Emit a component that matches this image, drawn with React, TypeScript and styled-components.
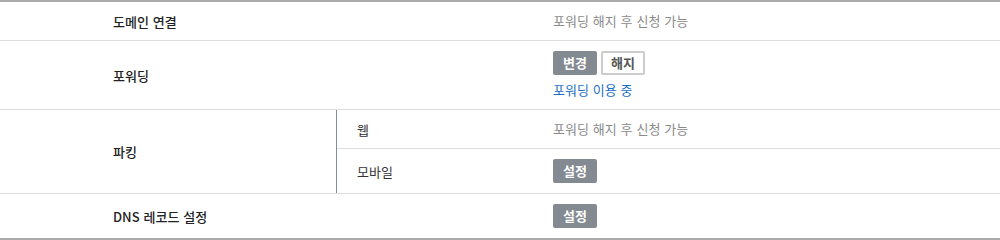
import * as React from 'react';
import styled, { createGlobalStyle } from 'styled-components';

const GlobalStyle = createGlobalStyle`
  html, body {
    margin: 0;
    padding: 0;
    background: #fff;
  }
  body {
    font-family: 'Noto Sans CJK KR', 'Noto Sans', sans-serif;
    font-size: 13px;
    word-spacing: 1px;
    color: #333;
  }
`;

export default function App() {
  return (
    <>
      <GlobalStyle />
      <Table>
        <Row>
          <Label>도메인 연결</Label>
          <Value>
            <Muted>포워딩 해지 후 신청 가능</Muted>
          </Value>
        </Row>
        <Row>
          <Label>포워딩</Label>
          <Value>
            <ButtonGroup>
              <Button>변경</Button>
              <Button variant="outline">해지</Button>
            </ButtonGroup>
            <Status>포워딩 이용 중</Status>
          </Value>
        </Row>
        <SplitRow>
          <GroupLabel>파킹</GroupLabel>
          <SubList>
            <SubRow>
              <SubLabel>웹</SubLabel>
              <Value>
                <Muted>포워딩 해지 후 신청 가능</Muted>
              </Value>
            </SubRow>
            <SubRow>
              <SubLabel>모바일</SubLabel>
              <Value>
                <Button>설정</Button>
              </Value>
            </SubRow>
          </SubList>
        </SplitRow>
        <Row>
          <Label>DNS 레코드 설정</Label>
          <Value>
            <Button>설정</Button>
          </Value>
        </Row>
      </Table>
    </>
  );
}

const Table = styled.div`
  border-top: 2px solid #aaa;
  border-bottom: 2px solid #aaa;
`;

const Row = styled.div`
  display: grid;
  grid-template-columns: 553px 1fr;
  border-bottom: 1px solid #ddd;
  &:last-child {
    border-bottom: none;
  }
`;

const SplitRow = styled.div`
  display: grid;
  grid-template-columns: 337px 1fr;
  border-bottom: 1px solid #ddd;
`;

const Label = styled.div`
  display: flex;
  align-items: center;
  padding-left: 113px;
  font-weight: 500;
  color: #222;
`;

const GroupLabel = styled(Label)`
  border-right: 1px solid #7f8e9e;
`;

const SubList = styled.div`
  display: flex;
  flex-direction: column;
`;

const SubRow = styled.div`
  display: grid;
  grid-template-columns: 216px 1fr;
  border-bottom: 1px solid #ddd;
  &:last-child {
    border-bottom: none;
  }
`;

const SubLabel = styled.div`
  display: flex;
  align-items: center;
  padding-left: 20px;
  color: #333;
`;

const Value = styled.div`
  display: flex;
  flex-direction: column;
  align-items: flex-start;
  justify-content: center;
  gap: 6px;
  padding: 10px 0;
  line-height: 18px;
`;

const Muted = styled.span`
  color: #8a8a8a;
`;

const Status = styled.span`
  color: #1a6fc4;
`;

const ButtonGroup = styled.div`
  display: flex;
  gap: 4px;
`;

const Button = styled.button<{ variant?: 'solid' | 'outline' }>`
  box-sizing: border-box;
  height: 24px;
  padding: 0 8px;
  font-family: inherit;
  font-size: 13px;
  font-weight: 700;
  line-height: 20px;
  border-radius: 2px;
  cursor: pointer;
  border: 2px solid ${({ variant }) => (variant === 'outline' ? '#ccc' : '#838a92')};
  background: ${({ variant }) => (variant === 'outline' ? '#fff' : '#838a92')};
  color: ${({ variant }) => (variant === 'outline' ? '#555' : '#fff')};
`;
